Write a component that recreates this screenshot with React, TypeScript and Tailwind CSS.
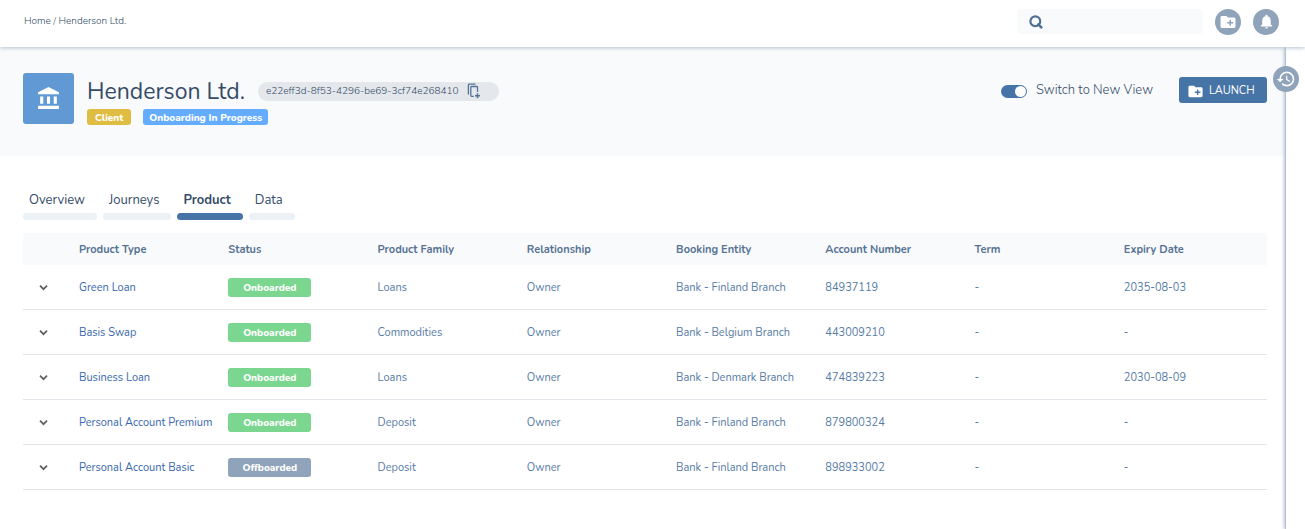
import React, { useState } from 'react';
import { MdAccountBalance, MdCreateNewFolder, MdHistory, MdNotifications } from 'react-icons/md';

interface Product {
  type: string;
  status: 'Onboarded' | 'Offboarded';
  family: string;
  relationship: string;
  entity: string;
  account: string;
  term: string;
  expiry: string;
}

const products: Product[] = [
  { type: 'Green Loan', status: 'Onboarded', family: 'Loans', relationship: 'Owner', entity: 'Bank - Finland Branch', account: '84937119', term: '-', expiry: '2035-08-03' },
  { type: 'Basis Swap', status: 'Onboarded', family: 'Commodities', relationship: 'Owner', entity: 'Bank - Belgium Branch', account: '443009210', term: '-', expiry: '-' },
  { type: 'Business Loan', status: 'Onboarded', family: 'Loans', relationship: 'Owner', entity: 'Bank - Denmark Branch', account: '474839223', term: '-', expiry: '2030-08-09' },
  { type: 'Personal Account Premium', status: 'Onboarded', family: 'Deposit', relationship: 'Owner', entity: 'Bank - Finland Branch', account: '879800324', term: '-', expiry: '-' },
  { type: 'Personal Account Basic', status: 'Offboarded', family: 'Deposit', relationship: 'Owner', entity: 'Bank - Finland Branch', account: '898933002', term: '-', expiry: '-' },
];

const columns = ['Product Type', 'Status', 'Product Family', 'Relationship', 'Booking Entity', 'Account Number', 'Term', 'Expiry Date'];

const tabs = ['Overview', 'Journeys', 'Product', 'Data'];

const SearchIcon = () => (
  <svg className="w-[14px] h-[14px] shrink-0" viewBox="0 0 14 14" fill="none" stroke="#4f7093" strokeWidth={2.2}>
    <circle cx="6.3" cy="6.3" r="4.9" />
    <path d="M9.3 9.3l3 3" strokeWidth={2.6} strokeLinecap="round" />
  </svg>
);

const CopyIcon = () => (
  <svg className="w-[14px] h-[16px]" viewBox="0 0 14 16" fill="none" stroke="#567394" strokeWidth={1.3}>
    <path d="M1.4 11.5V1.8Q1.4 1.2 2 1.2H8.5" />
    <path d="M6.8 13.3H4.6Q3.8 13.3 3.8 12.5V4.2Q3.8 3.5 4.6 3.5H9.8Q10.5 3.5 10.5 4.2V9" />
    <path d="M10.5 10.2V15.2M8 12.7H13" strokeWidth={1.5} />
  </svg>
);

const ChevronIcon = () => (
  <svg className="w-[15px] h-[15px]" viewBox="0 0 15 15" fill="none" stroke="#5c5f63" strokeWidth={1.7}>
    <path d="M4 5.7l3.5 3.5L11 5.7" />
  </svg>
);

const Header = () => (
  <header className="relative z-10 flex items-center justify-between h-[47px] bg-white pl-6 pr-[26px] pb-1 shadow-[0_1px_4px_#b4c2d2]">
    <nav aria-label="Breadcrumb" className="text-[10px] font-light text-[#344c68]">
      <a href="#home">Home</a> / <a href="#henderson">Henderson Ltd.</a>
    </nav>
    <div className="flex items-center">
      <label className="flex items-center w-[186px] h-[25px] mr-3 pl-3 pr-2 gap-2 rounded-sm bg-[#f9fafc]">
        <SearchIcon />
        <input type="search" aria-label="Search" className="min-w-0 flex-1 bg-transparent text-xs outline-none" />
      </label>
      <button aria-label="New folder" className="flex items-center justify-center w-[26px] h-[26px] mr-3 rounded-full bg-[#8fa3ba] text-white">
        <MdCreateNewFolder size={18} />
      </button>
      <button aria-label="Notifications" className="flex items-center justify-center w-[26px] h-[26px] rounded-full bg-[#8fa3ba] text-white">
        <MdNotifications size={17} />
      </button>
    </div>
  </header>
);

const EntityBanner = () => {
  const [newView, setNewView] = useState(true);

  return (
    <section className="flex items-start justify-between h-[109px] pt-[26px] pl-[23px] pr-[18px] bg-[#f9fafc]">
      <div className="flex">
        <div className="flex items-center justify-center w-[51px] h-[51px] rounded-[3px] bg-[#6099d4] text-white">
          <MdAccountBalance size={25} />
        </div>
        <div className="ml-[13px]">
          <div className="flex items-center h-9 gap-[13px]">
            <h1 className="pt-0.5 text-[23px] text-[#344c68]">Henderson Ltd.</h1>
            <div className="flex items-center h-[19px] pl-2 pr-[18px] gap-2 rounded-full bg-[#e4e7ec] text-[10px] font-light text-[#344c68]">
              <span>e22eff3d-8f53-4296-be69-3cf74e268410</span>
              <button aria-label="Copy identifier">
                <CopyIcon />
              </button>
            </div>
          </div>
          <div className="flex gap-3 text-[10px] leading-[18px] font-extrabold text-white">
            <span className="h-4 px-2 rounded-[3px] bg-[#dfbd42]">Client</span>
            <span className="h-4 px-[6px] rounded-[3px] bg-[#64acff]">Onboarding In Progress</span>
          </div>
        </div>
      </div>
      <div className="flex items-center pt-1">
        <label className="flex items-center gap-[9px] mr-[26px] pt-0.5 text-[13px] font-light text-[#344c68]">
          <input type="checkbox" checked={newView} onChange={(e) => setNewView(e.target.checked)} className="peer sr-only" />
          <span className="flex items-center w-[26px] h-[13px] px-px rounded-full bg-[#8fa3ba] peer-checked:bg-[#4774a6] peer-checked:justify-end">
            <span className="w-[11px] h-[11px] rounded-full bg-white"></span>
          </span>
          Switch to New View
        </label>
        <button className="flex items-center w-[88px] h-[26px] pl-2 pt-0.5 gap-[5px] rounded-[3px] bg-[#4774a6] text-[11px] text-white">
          <MdCreateNewFolder size={17} />
          LAUNCH
        </button>
      </div>
    </section>
  );
};

const ProductTable = () => (
  <table className="w-full table-fixed border-separate border-spacing-0 text-left text-[11px] text-[#567ba5]">
    <colgroup>
      <col className="w-14" />
      {columns.slice(0, 7).map((c) => (
        <col key={c} className="w-[12%]" />
      ))}
      <col />
    </colgroup>
    <thead>
      <tr className="h-8 bg-[#f9fafc] text-[#567394]">
        <th aria-label="Expand"></th>
        {columns.map((c) => (
          <th key={c} className="pt-0.5 font-bold">{c}</th>
        ))}
      </tr>
    </thead>
    <tbody>
      {products.map((p) => (
        <tr key={p.account} className="h-[45px] whitespace-nowrap *:border-b *:border-[#e1e4e8]">
          <td className="pl-[13px]">
            <button aria-label={`Expand ${p.type}`} className="block">
              <ChevronIcon />
            </button>
          </td>
          <td className="pt-0.5"><a href="#product" className="text-[#3767ae]">{p.type}</a></td>
          <td>
            <span className={`block w-[83px] h-[19px] rounded-[3px] text-center text-[10px] leading-5 font-extrabold text-white ${p.status === 'Onboarded' ? 'bg-[#7bd68f]' : 'bg-[#8fa3ba]'}`}>
              {p.status}
            </span>
          </td>
          <td className="pt-0.5">{p.family}</td>
          <td className="pt-0.5">{p.relationship}</td>
          <td className="pt-0.5">{p.entity}</td>
          <td className="pt-0.5">{p.account}</td>
          <td className="pt-0.5">{p.term}</td>
          <td className="pt-0.5">{p.expiry}</td>
        </tr>
      ))}
    </tbody>
  </table>
);

const App = () => {
  const [active, setActive] = useState('Product');

  return (
    <div className="flex flex-col min-h-screen bg-white font-['Nunito','Noto_Sans',sans-serif]">
      <Header />
      <div className="flex flex-1">
        <main className="flex-1 min-w-0">
          <EntityBanner />
          <div className="pt-[34px] pl-[23px] pr-[18px]">
            {/* Tabs */}
            <div role="tablist" className="flex gap-[6px] mb-[13px] text-[13px] leading-5 text-[#344c68]">
              {tabs.map((tab) => (
                <button key={tab} role="tab" aria-selected={tab === active} onClick={() => setActive(tab)} className="flex flex-col gap-[3px]">
                  <span className={`pl-[6px] pr-3 ${tab === active ? 'font-bold' : ''}`}>{tab}</span>
                  <span className={`w-full h-[7px] rounded-full ${tab === active ? 'bg-[#4774a6]' : 'bg-[#ecf1f6]'}`}></span>
                </button>
              ))}
            </div>
            <ProductTable />
          </div>
        </main>
        {/* History rail */}
        <aside className="relative w-5 border-l border-[#b4c2d2] bg-white shadow-[-1px_0_3px_#b4c2d2]">
          <button aria-label="History" className="absolute top-[19px] -left-[13px] flex items-center justify-center w-[26px] h-[26px] rounded-full bg-[#8fa3ba] text-white">
            <MdHistory size={20} />
          </button>
        </aside>
      </div>
    </div>
  );
};

export default App;
